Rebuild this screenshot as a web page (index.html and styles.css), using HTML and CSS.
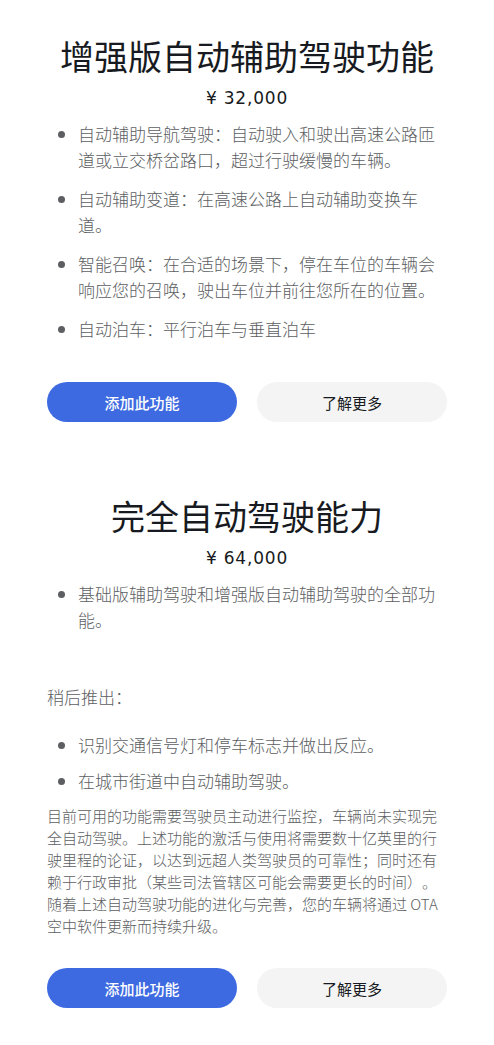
FILE: index.html
```html
<!DOCTYPE html>
<html lang="zh-CN">
<head>
  <meta charset="UTF-8" />
  <meta name="viewport" content="width=device-width, initial-scale=1.0"/>
  <title>自动驾驶功能</title>
  <link rel="stylesheet" href="styles.css">
</head>
<body>
  <main class="page">
    <section class="feature">
      <h2 class="feature-title">增强版自动辅助驾驶功能</h2>
      <p class="feature-price">¥ 32,000</p>
      <ul class="feature-list">
        <li>自动辅助导航驾驶：自动驶入和驶出高速公路匝道或立交桥岔路口，超过行驶缓慢的车辆。</li>
        <li>自动辅助变道：在高速公路上自动辅助变换车道。</li>
        <li>智能召唤：在合适的场景下，停在车位的车辆会响应您的召唤，驶出车位并前往您所在的位置。</li>
        <li>自动泊车：平行泊车与垂直泊车</li>
      </ul>
      <div class="feature-actions">
        <button class="btn btn-primary">添加此功能</button>
        <button class="btn btn-secondary">了解更多</button>
      </div>
    </section>

    <section class="feature feature-next">
      <h2 class="feature-title">完全自动驾驶能力</h2>
      <p class="feature-price">¥ 64,000</p>
      <ul class="feature-list">
        <li>基础版辅助驾驶和增强版自动辅助驾驶的全部功能。</li>
      </ul>
      <p class="coming-label">稍后推出：</p>
      <ul class="feature-list coming-list">
        <li>识别交通信号灯和停车标志并做出反应。</li>
        <li>在城市街道中自动辅助驾驶。</li>
      </ul>
      <p class="disclaimer">目前可用的功能需要驾驶员主动进行监控，车辆尚未实现完全自动驾驶。上述功能的激活与使用将需要数十亿英里的行驶里程的论证，以达到远超人类驾驶员的可靠性；同时还有赖于行政审批（某些司法管辖区可能会需要更长的时间）。随着上述自动驾驶功能的进化与完善，您的车辆将通过 OTA 空中软件更新而持续升级。</p>
      <div class="feature-actions">
        <button class="btn btn-primary">添加此功能</button>
        <button class="btn btn-secondary">了解更多</button>
      </div>
    </section>
  </main>
</body>
</html>
```

FILE: styles.css
```css
body {
  font-family: "Noto Sans CJK SC", sans-serif;
  font-weight: 300;
  background-color: #ffffff;
  color: #5c5e62;
  margin: 0;
  text-spacing-trim: space-all;
}

.page {
  width: 400px;
  margin: 0 auto;
  padding-top: 36px;
}

.feature-next {
  margin-top: 74px;
}

.feature-title {
  margin: 0;
  font-size: 34px;
  line-height: 40px;
  font-weight: 400;
  color: #171a20;
  text-align: center;
}

.feature-price {
  margin: 10px 0 0;
  font-family: "DejaVu Sans", "Noto Sans CJK SC", sans-serif;
  font-weight: 400;
  font-size: 17px;
  letter-spacing: 0.8px;
  line-height: 24px;
  color: #171a20;
  text-align: center;
}

.feature-list {
  margin: 11px 0 0;
  padding-left: 31px;
  font-size: 17px;
  line-height: 26px;
}
.feature-list li {
  margin-bottom: 13px;
}
.feature-list li:last-child {
  margin-bottom: 0;
}

.coming-label {
  margin: 51px 0 0;
  font-size: 17px;
  line-height: 26px;
}

.coming-list {
  margin-top: 22px;
}
.coming-list li {
  margin-bottom: 10px;
}

.disclaimer {
  margin: 11px 0 0;
  font-size: 15px;
  line-height: 22px;
}

.feature-actions {
  display: flex;
  gap: 20px;
  margin-top: 40px;
}
.feature-next .feature-actions {
  margin-top: 31px;
}

.btn {
  flex: 1;
  height: 40px;
  border: none;
  border-radius: 20px;
  font-family: "Noto Sans CJK SC", sans-serif;
  font-size: 15px;
  cursor: pointer;
}
.btn-primary {
  background-color: #3e6ae1;
  color: #ffffff;
  font-weight: 500;
}
.btn-secondary {
  background-color: #f4f4f4;
  color: #171a20;
  font-weight: 400;
}
```
